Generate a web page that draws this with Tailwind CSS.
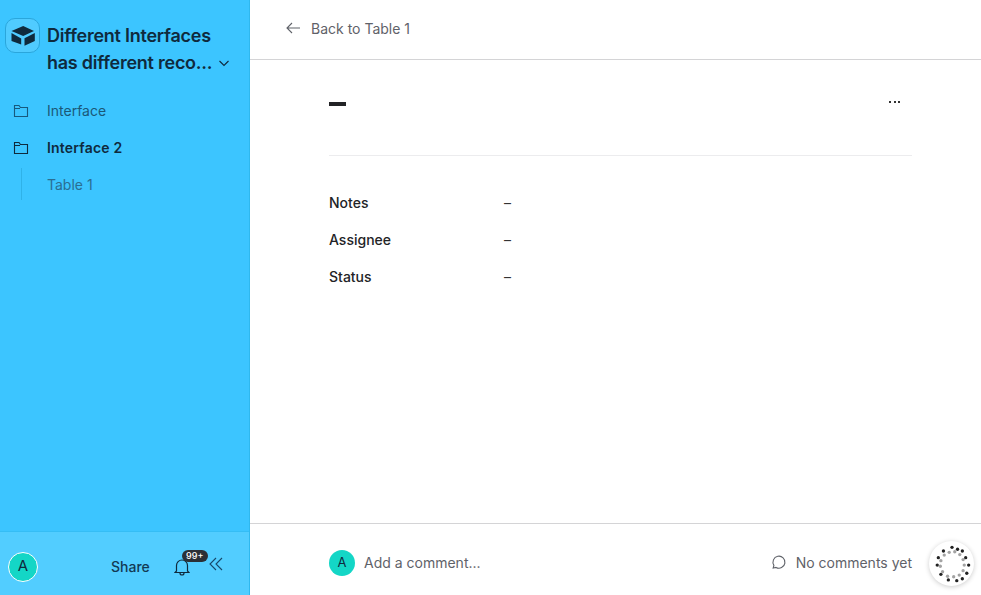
<!DOCTYPE html>
<html lang="en">
<head>
  <meta charset="UTF-8">
  <title>Table 1</title>
  <script src="https://cdn.jsdelivr.net/npm/@tailwindcss/browser@4"></script>
</head>
<body class="h-screen overflow-hidden bg-white font-['Inter',sans-serif] text-[#1f2328]">
  <div class="flex h-[595px] w-[981px]">

    <!-- sidebar -->
    <aside class="flex w-[250px] shrink-0 flex-col border-r border-[#2fb8ee] bg-[#3cc5ff]">
      <div class="flex-1">
        <div class="flex pl-[5px] pt-[18px]">
          <div class="flex h-[35px] w-[35px] shrink-0 items-center justify-center rounded-[10px] border border-[#2aa6dc] bg-white/10">
            <svg width="26" height="24" viewBox="0 0 26 24" fill="#0f2a3d">
              <path d="M13.2 2 L24 7 L13.2 12 L1.5 7 Z"/>
              <path d="M14.5 14.3 L24.8 9 V17 L14.5 21.7 Z"/>
              <path d="M1.5 9 L11.2 14.5 V20.5 L1.5 17 Z"/>
            </svg>
          </div>
          <div class="ml-[7px] w-[195px]">
            <div class="mt-[4px] text-[18px] leading-[27px] font-semibold tracking-[-0.25px] text-[#0f2a3d]">Different Interfaces</div>
            <div class="flex items-center text-[18px] leading-[27px] font-semibold tracking-[-0.25px] text-[#0f2a3d]">
              <span>has different reco...</span>
              <svg class="ml-[6px]" width="12" height="12" viewBox="0 0 12 12" fill="none" stroke="#0f2a3d" stroke-width="1.1"><path d="M1.5 4 L6 8.5 L10.5 4"/></svg>
            </div>
          </div>
        </div>

        <nav class="mt-[16px] text-[14px]">
          <div class="flex h-[37px] items-center pl-[13px]">
            <svg class="text-[#17597d]" width="16" height="14" viewBox="0 0 16 14" fill="none" stroke="currentColor" stroke-width="1.1"><path d="M1.5 12.5 V1.5 H6 L7.5 3.5 H14.5 V12.5 Z M1.5 4.5 H7"/></svg>
            <span class="ml-[18px] text-[#1b5877]">Interface</span>
          </div>
          <div class="flex h-[37px] items-center pl-[13px]">
            <svg class="text-[#0f2a3d]" width="16" height="14" viewBox="0 0 16 14" fill="none" stroke="currentColor" stroke-width="1.1"><path d="M1.5 12.5 V1.5 H6 L7.5 3.5 H14.5 V12.5 Z M1.5 4.5 H7"/></svg>
            <span class="ml-[18px] font-semibold tracking-[0.2px] text-[#0f2a3d]">Interface 2</span>
          </div>
          <div class="ml-[21px] mt-[2px] flex h-[32px] items-center border-l border-[#2fb2e8] pl-[25px]">
            <span class="text-[#2a6e92]">Table 1</span>
          </div>
        </nav>
      </div>

      <div class="flex h-[64px] items-center border-t border-[#35bdf5] bg-[#52cdff] pl-[8px] pt-[6px]">
        <div class="flex h-[30px] w-[30px] items-center justify-center rounded-full border border-white bg-[#14d6c6] text-[15px] text-[#0f2a3d]">A</div>
        <span class="ml-[73px] text-[14px] font-medium text-[#123a54]">Share</span>
        <div class="relative ml-[24px] h-[18px] w-[16px]">
          <svg width="16" height="18" viewBox="0 0 16 18" fill="none" stroke="#0f2a3d" stroke-width="1.2"><path d="M2.5 13 V7.5 a5.5 5.5 0 0 1 11 0 V13 L15 14.5 H1 Z M6 15 a2 2 0 0 0 4 0"/></svg>
          <span class="absolute left-[8px] top-[-8px] flex h-[12px] w-[26px] items-center justify-center rounded-full bg-[#2b3036] text-[9px] font-medium text-white">99+</span>
        </div>
        <svg class="ml-[19px] mt-[-6px]" width="14" height="14" viewBox="0 0 14 14" fill="none" stroke="#17486a" stroke-width="1.1"><path d="M7 1 L1 7 L7 13 M13 1 L7 7 L13 13"/></svg>
      </div>
    </aside>

    <!-- main -->
    <main class="flex min-w-0 flex-1 flex-col">
      <header class="flex h-[60px] shrink-0 items-center border-b border-[#d4d4d6] pb-[3px] pl-[36px] text-[14px] text-[#5f6269]">
        <svg width="15" height="12" viewBox="0 0 15 12" fill="none" stroke="currentColor" stroke-width="1.1"><path d="M14 6 H1 M6 1 L1 6 L6 11"/></svg>
        <span class="ml-[10px]">Back to Table 1</span>
      </header>

      <div class="flex-1 px-[79px] pr-[69px]">
        <div class="flex h-[96px] justify-between border-b border-[#ececee]">
          <div class="mt-[42px] h-[4px] w-[17px] bg-[#222326]"></div>
          <div class="mr-[12px] mt-[41px] flex h-[2px] gap-[2.5px]">
            <span class="h-[2px] w-[2px] bg-[#333]"></span>
            <span class="h-[2px] w-[2px] bg-[#333]"></span>
            <span class="h-[2px] w-[2px] bg-[#333]"></span>
          </div>
        </div>
        <dl class="mt-[36px] text-[14px]">
          <div class="flex h-[37px]"><dt class="w-[175px] font-medium text-[#222326]">Notes</dt><dd class="text-[#333]">–</dd></div>
          <div class="flex h-[37px]"><dt class="w-[175px] font-medium text-[#222326]">Assignee</dt><dd class="text-[#333]">–</dd></div>
          <div class="flex h-[37px]"><dt class="w-[175px] font-medium text-[#222326]">Status</dt><dd class="text-[#333]">–</dd></div>
        </dl>
      </div>

      <footer class="relative flex h-[72px] shrink-0 items-center border-t border-[#d4d4d6] pl-[79px] pt-[6px] text-[14px] text-[#5f6269]">
        <div class="flex h-[26px] w-[26px] items-center justify-center rounded-full bg-[#14d6c6] text-[13px] text-[#0f2a3d]">A</div>
        <span class="ml-[9px]">Add a comment...</span>
        <svg class="ml-auto" width="15" height="15" viewBox="0 0 15 15" fill="none" stroke="currentColor" stroke-width="1.1"><path d="M2.2 13 L2.9 10.4 A6 6 0 1 1 5 12.4 Z"/></svg>
        <span class="ml-[10px] mr-[69px]">No comments yet</span>
        <div class="absolute right-[7px] top-[17px] flex h-[45px] w-[45px] items-center justify-center rounded-full bg-white shadow-[0_1px_5px_rgba(0,0,0,0.2)]">
          <svg width="40" height="40" viewBox="0 0 36 36">
            <g fill="#222">
              <circle cx="18" cy="3" r="1.5"/><circle cx="23" cy="4.7" r="1.5"/><circle cx="27.3" cy="6.3" r="1.5"/>
              <circle cx="30.3" cy="12.3" r="1.5"/><circle cx="33" cy="19" r="1.5"/><circle cx="31.3" cy="26.3" r="1.5"/>
              <circle cx="27.3" cy="31.3" r="1.5"/><circle cx="22.3" cy="33" r="1.5"/><circle cx="14.7" cy="32.3" r="1.5"/>
              <circle cx="8" cy="27.3" r="1.5"/><circle cx="4.7" cy="19" r="1.5"/><circle cx="5.7" cy="12.3" r="1.5"/>
              <circle cx="10.3" cy="6.3" r="1.5"/>
            </g>
            <g fill="#a3a3a3">
              <circle cx="15.5" cy="7.5" r="1.5"/><circle cx="20.5" cy="7" r="1.5"/><circle cx="25" cy="9.5" r="1.5"/>
              <circle cx="28" cy="14" r="1.5"/><circle cx="29" cy="19" r="1.5"/><circle cx="28" cy="24" r="1.5"/>
              <circle cx="24.5" cy="28" r="1.5"/><circle cx="19.5" cy="29.5" r="1.5"/><circle cx="14" cy="29" r="1.5"/>
              <circle cx="9.5" cy="25" r="1.5"/><circle cx="7.5" cy="20" r="1.5"/><circle cx="8" cy="15" r="1.5"/>
              <circle cx="11" cy="10" r="1.5"/>
            </g>
          </svg>
        </div>
      </footer>
    </main>
  </div>
</body>
</html>
